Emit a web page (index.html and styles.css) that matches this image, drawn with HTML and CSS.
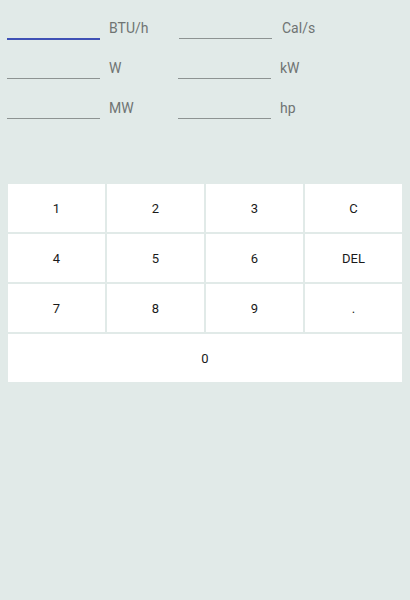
FILE: index.html
```html
<!DOCTYPE html>
<html>
<head>
<meta charset="utf-8">
<link rel="stylesheet" href="styles.css">
</head>
<body>
<div class="converter">
  <div class="field"><div class="input focused"></div><span class="unit">BTU/h</span></div>
  <div class="field shifted"><div class="input"></div><span class="unit">Cal/s</span></div>
  <div class="field"><div class="input"></div><span class="unit">W</span></div>
  <div class="field"><div class="input"></div><span class="unit">kW</span></div>
  <div class="field"><div class="input"></div><span class="unit">MW</span></div>
  <div class="field"><div class="input"></div><span class="unit">hp</span></div>
</div>
<div class="keypad">
  <div class="key">1</div>
  <div class="key">2</div>
  <div class="key">3</div>
  <div class="key">C</div>
  <div class="key">4</div>
  <div class="key">5</div>
  <div class="key">6</div>
  <div class="key">DEL</div>
  <div class="key">7</div>
  <div class="key">8</div>
  <div class="key">9</div>
  <div class="key">.</div>
  <div class="key zero">0</div>
</div>
</body>
</html>
```
FILE: styles.css
```css
html, body {
  margin: 0;
  padding: 0;
  background: #e1eae8;
  font-family: Roboto, "Liberation Sans", sans-serif;
}
.converter {
  display: grid;
  grid-template-columns: 171px 171px;
  padding-left: 7px;
}
.field {
  display: flex;
  gap: 8px;
  height: 40px;
}
.field.shifted {
  padding-left: 1px;
}
.field.shifted .unit {
  padding-left: 2px;
}
.input {
  width: 93px;
  height: 38px;
  border-bottom: 1px solid #8d9392;
}
.input.focused {
  border-bottom: 2px solid #3f51b5;
}
.unit {
  padding-top: 20px;
  font-size: 14px;
  line-height: 16px;
  color: #6f7473;
  padding-left: 1px;
}
.keypad {
  margin: 64px 8px 0 8px;
  display: grid;
  grid-template-columns: repeat(4, 1fr);
  grid-auto-rows: 48px;
  gap: 2px;
}
.key {
  background: #ffffff;
  display: flex;
  align-items: center;
  justify-content: center;
  padding-top: 1px;
  font-size: 13px;
  color: #1a1a1a;
}
.zero {
  grid-column: 1 / 5;
}
```
